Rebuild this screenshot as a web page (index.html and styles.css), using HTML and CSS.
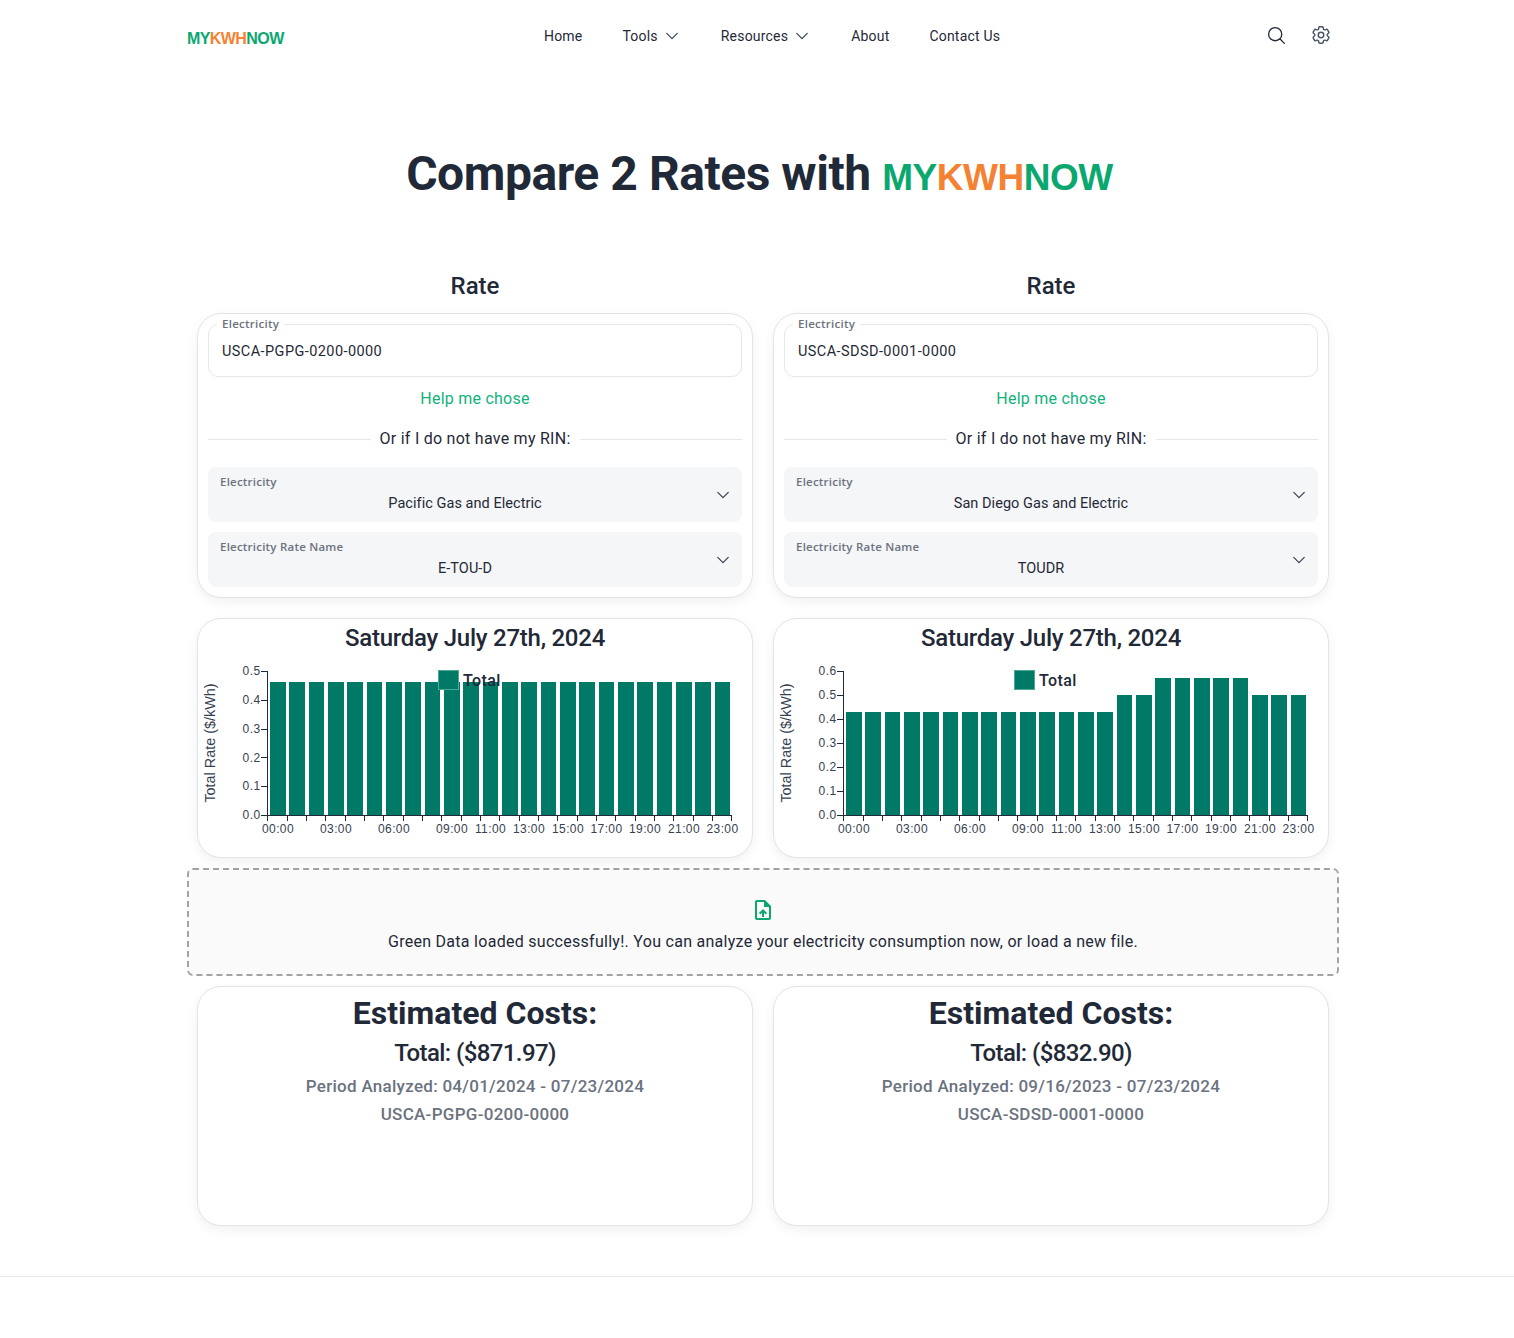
FILE: index.html
```html
<!DOCTYPE html>
<html lang="en">
<head>
<meta charset="utf-8">
<title>Compare 2 Rates</title>
<link rel="stylesheet" href="styles.css">
</head>
<body>
<header class="topbar">
  <a class="logo"><span class="g">MY</span><span class="o">KWH</span><span class="g">NOW</span></a>
  <nav class="nav">
    <a>Home</a>
    <a class="drop">Tools <svg class="chev" viewBox="0 0 24 24"><path d="M5 8.5l7 7 7-7"/></svg></a>
    <a class="drop">Resources <svg class="chev" viewBox="0 0 24 24"><path d="M5 8.5l7 7 7-7"/></svg></a>
    <a>About</a>
    <a>Contact Us</a>
  </nav>
  <div class="tools">
    <svg class="ico-search" viewBox="0 0 24 24"><path d="M21 21l-5.197-5.197m0 0A7.5 7.5 0 105.196 5.196a7.5 7.5 0 0010.607 10.607z"/></svg>
    <svg class="ico-gear" viewBox="0 0 24 24"><path d="M9.594 3.94c.09-.542.56-.94 1.11-.94h2.593c.55 0 1.02.398 1.11.94l.213 1.281c.063.374.313.686.645.87.074.04.147.083.22.127.324.196.72.257 1.075.124l1.217-.456a1.125 1.125 0 011.37.49l1.296 2.247a1.125 1.125 0 01-.26 1.431l-1.003.827c-.293.24-.438.613-.431.992a6.759 6.759 0 010 .255c-.007.378.138.75.43.99l1.005.828c.424.35.534.954.26 1.43l-1.298 2.247a1.125 1.125 0 01-1.369.491l-1.217-.456c-.355-.133-.75-.072-1.076.124a6.57 6.57 0 01-.22.128c-.331.183-.581.495-.644.869l-.213 1.28c-.09.543-.56.941-1.11.941h-2.594c-.55 0-1.02-.398-1.11-.94l-.213-1.281c-.062-.374-.312-.686-.644-.87a6.52 6.52 0 01-.22-.127c-.325-.196-.72-.257-1.076-.124l-1.217.456a1.125 1.125 0 01-1.369-.49l-1.297-2.247a1.125 1.125 0 01.26-1.431l1.004-.827c.292-.24.437-.613.43-.992a6.932 6.932 0 010-.255c.007-.378-.138-.75-.43-.99l-1.004-.828a1.125 1.125 0 01-.26-1.43l1.297-2.247a1.125 1.125 0 011.37-.491l1.216.456c.356.133.751.072 1.076-.124.072-.044.146-.087.22-.128.332-.183.582-.495.644-.869l.214-1.281z"/><circle cx="12" cy="12" r="3"/></svg>
  </div>
</header>

<main class="main">
  <h1 class="title">Compare 2 Rates with <span class="brand"><span class="g">MY</span><span class="o">KWH</span><span class="g">NOW</span></span></h1>

  <div class="cols heads">
    <h2 class="rate-head">Rate</h2>
    <h2 class="rate-head">Rate</h2>
  </div>

  <div class="cols">
    <section class="card form">
      <fieldset class="rin"><legend>Electricity</legend><div class="rin-val">USCA-PGPG-0200-0000</div></fieldset>
      <a class="help">Help me chose</a>
      <div class="divider"><span>Or if I do not have my RIN:</span></div>
      <div class="select"><div class="sel-label">Electricity</div><div class="sel-val">Pacific Gas and Electric</div><svg class="chev sel-chev" viewBox="0 0 24 24"><path d="M5 8.5l7 7 7-7"/></svg></div>
      <div class="select"><div class="sel-label">Electricity Rate Name</div><div class="sel-val">E-TOU-D</div><svg class="chev sel-chev" viewBox="0 0 24 24"><path d="M5 8.5l7 7 7-7"/></svg></div>
    </section>
    <section class="card form">
      <fieldset class="rin"><legend>Electricity</legend><div class="rin-val">USCA-SDSD-0001-0000</div></fieldset>
      <a class="help">Help me chose</a>
      <div class="divider"><span>Or if I do not have my RIN:</span></div>
      <div class="select"><div class="sel-label">Electricity</div><div class="sel-val">San Diego Gas and Electric</div><svg class="chev sel-chev" viewBox="0 0 24 24"><path d="M5 8.5l7 7 7-7"/></svg></div>
      <div class="select"><div class="sel-label">Electricity Rate Name</div><div class="sel-val">TOUDR</div><svg class="chev sel-chev" viewBox="0 0 24 24"><path d="M5 8.5l7 7 7-7"/></svg></div>
    </section>
  </div>

  <div class="cols">
    <section class="card chart-card">
      <h3 class="chart-title">Saturday July 27th, 2024</h3>
      <svg class="chart" viewBox="198 655 554 200">
        <g class="bars">
          <rect x="270" y="682" width="15.5" height="133"/><rect x="289.3" y="682" width="15.5" height="133"/><rect x="308.7" y="682" width="15.5" height="133"/><rect x="328" y="682" width="15.5" height="133"/><rect x="347.3" y="682" width="15.5" height="133"/><rect x="366.7" y="682" width="15.5" height="133"/><rect x="386" y="682" width="15.5" height="133"/><rect x="405.3" y="682" width="15.5" height="133"/><rect x="424.7" y="682" width="15.5" height="133"/><rect x="444" y="682" width="15.5" height="133"/><rect x="463.3" y="682" width="15.5" height="133"/><rect x="482.7" y="682" width="15.5" height="133"/><rect x="502" y="682" width="15.5" height="133"/><rect x="521.3" y="682" width="15.5" height="133"/><rect x="540.7" y="682" width="15.5" height="133"/><rect x="560" y="682" width="15.5" height="133"/><rect x="579.3" y="682" width="15.5" height="133"/><rect x="598.7" y="682" width="15.5" height="133"/><rect x="618" y="682" width="15.5" height="133"/><rect x="637.3" y="682" width="15.5" height="133"/><rect x="656.7" y="682" width="15.5" height="133"/><rect x="676" y="682" width="15.5" height="133"/><rect x="695.3" y="682" width="15.5" height="133"/><rect x="714.7" y="682" width="15.5" height="133"/>
        </g>
        <path class="axis" d="M267.5 671V815.5H731M261 671.5h6M261 700.5h6M261 729.5h6M261 757.5h6M261 786.5h6M261 815.5h6M267.5 815v6M287 815v6M306.5 815v6M325.5 815v6M345 815v6M364.5 815v6M383.5 815v6M403 815v6M422.5 815v6M441.5 815v6M461 815v6M480.5 815v6M499.5 815v6M519 815v6M538.5 815v6M557.5 815v6M577 815v6M596.5 815v6M615.5 815v6M635 815v6M654.5 815v6M673.5 815v6M693 815v6M712.5 815v6M731 815v6"/>
        <g class="ylabels">
          <text x="260.5" y="675">0.5</text><text x="260.5" y="704">0.4</text><text x="260.5" y="733">0.3</text><text x="260.5" y="762">0.2</text><text x="260.5" y="790">0.1</text><text x="260.5" y="819">0.0</text>
        </g>
        <g class="xlabels">
          <text x="278" y="833">00:00</text><text x="336" y="833">03:00</text><text x="394" y="833">06:00</text><text x="452" y="833">09:00</text><text x="490.5" y="833">11:00</text><text x="529" y="833">13:00</text><text x="568" y="833">15:00</text><text x="606.5" y="833">17:00</text><text x="645" y="833">19:00</text><text x="684" y="833">21:00</text><text x="722.5" y="833">23:00</text>
        </g>
        <text class="ytitle" transform="translate(215 743) rotate(-90)">Total Rate ($/kWh)</text>
        <rect class="swatch" x="438.5" y="670.5" width="20" height="19"/>
        <text class="legend" x="463" y="686">Total</text>
      </svg>
    </section>
    <section class="card chart-card">
      <h3 class="chart-title">Saturday July 27th, 2024</h3>
      <svg class="chart" viewBox="198 655 554 200">
        <g class="bars">
          <rect x="270" y="712" width="15.5" height="103"/><rect x="289.3" y="712" width="15.5" height="103"/><rect x="308.7" y="712" width="15.5" height="103"/><rect x="328" y="712" width="15.5" height="103"/><rect x="347.3" y="712" width="15.5" height="103"/><rect x="366.7" y="712" width="15.5" height="103"/><rect x="386" y="712" width="15.5" height="103"/><rect x="405.3" y="712" width="15.5" height="103"/><rect x="424.7" y="712" width="15.5" height="103"/><rect x="444" y="712" width="15.5" height="103"/><rect x="463.3" y="712" width="15.5" height="103"/><rect x="482.7" y="712" width="15.5" height="103"/><rect x="502" y="712" width="15.5" height="103"/><rect x="521.3" y="712" width="15.5" height="103"/><rect x="540.7" y="695" width="15.5" height="120"/><rect x="560" y="695" width="15.5" height="120"/><rect x="579.3" y="678" width="15.5" height="137"/><rect x="598.7" y="678" width="15.5" height="137"/><rect x="618" y="678" width="15.5" height="137"/><rect x="637.3" y="678" width="15.5" height="137"/><rect x="656.7" y="678" width="15.5" height="137"/><rect x="676" y="695" width="15.5" height="120"/><rect x="695.3" y="695" width="15.5" height="120"/><rect x="714.7" y="695" width="15.5" height="120"/>
        </g>
        <path class="axis" d="M267.5 671V815.5H731M261 671.5h6M261 695.5h6M261 719.5h6M261 743.5h6M261 767.5h6M261 791.5h6M261 815.5h6M267.5 815v6M287 815v6M306.5 815v6M325.5 815v6M345 815v6M364.5 815v6M383.5 815v6M403 815v6M422.5 815v6M441.5 815v6M461 815v6M480.5 815v6M499.5 815v6M519 815v6M538.5 815v6M557.5 815v6M577 815v6M596.5 815v6M615.5 815v6M635 815v6M654.5 815v6M673.5 815v6M693 815v6M712.5 815v6M731 815v6"/>
        <g class="ylabels">
          <text x="260.5" y="675">0.6</text><text x="260.5" y="699">0.5</text><text x="260.5" y="723">0.4</text><text x="260.5" y="747">0.3</text><text x="260.5" y="771">0.2</text><text x="260.5" y="795">0.1</text><text x="260.5" y="819">0.0</text>
        </g>
        <g class="xlabels">
          <text x="278" y="833">00:00</text><text x="336" y="833">03:00</text><text x="394" y="833">06:00</text><text x="452" y="833">09:00</text><text x="490.5" y="833">11:00</text><text x="529" y="833">13:00</text><text x="568" y="833">15:00</text><text x="606.5" y="833">17:00</text><text x="645" y="833">19:00</text><text x="684" y="833">21:00</text><text x="722.5" y="833">23:00</text>
        </g>
        <text class="ytitle" transform="translate(215 743) rotate(-90)">Total Rate ($/kWh)</text>
        <rect class="swatch" x="438.5" y="670.5" width="20" height="19"/>
        <text class="legend" x="463" y="686">Total</text>
      </svg>
    </section>
  </div>

  <section class="dropzone">
    <svg class="upload" viewBox="0 0 24 24"><path d="M14 2H6c-1.1 0-1.99.9-1.99 2L4 20c0 1.1.89 2 1.99 2H18c1.1 0 2-.9 2-2V8l-6-6zm4 18H6V4h7v5h5v11zM8 15.01l1.41 1.41L11 14.84V19h2v-4.16l1.59 1.59L16 15.01 12.01 11 8 15.01z"/></svg>
    <p class="drop-text">Green Data loaded successfully!. You can analyze your electricity consumption now, or load a new file.</p>
  </section>

  <div class="cols">
    <section class="card cost">
      <h2 class="cost-title">Estimated Costs:</h2>
      <div class="cost-total">Total: ($871.97)</div>
      <div class="cost-sub">Period Analyzed: 04/01/2024 - 07/23/2024</div>
      <div class="cost-sub">USCA-PGPG-0200-0000</div>
    </section>
    <section class="card cost">
      <h2 class="cost-title">Estimated Costs:</h2>
      <div class="cost-total">Total: ($832.90)</div>
      <div class="cost-sub">Period Analyzed: 09/16/2023 - 07/23/2024</div>
      <div class="cost-sub">USCA-SDSD-0001-0000</div>
    </section>
  </div>
</main>
<footer class="footer"></footer>
</body>
</html>
```
FILE: styles.css
```css
* { box-sizing: border-box; }
html, body { margin: 0; padding: 0; }
body {
  background: #fff;
  color: #1f2937;
  font-family: Roboto, "Liberation Sans", sans-serif;
  font-size: 16px;
  min-height: 1338px;
}
.g { color: #0aa76f; }
.o { color: #f58233; }

.topbar {
  display: flex;
  align-items: center;
  height: 72px;
  width: 1145px;
  margin-left: 187px;
}
.logo {
  width: 357px;
  font: 700 16px/1 "Liberation Sans", sans-serif;
  letter-spacing: -.58px;
  padding-top: 5px;
}
.nav { display: flex; gap: 40px; font-size: 14px; letter-spacing: .2px; color: #1f2937; }
.nav a { display: flex; align-items: center; gap: 5px; }
.chev { width: 18px; height: 18px; fill: none; stroke: #374151; stroke-width: 1.6; stroke-linecap: round; stroke-linejoin: round; }
.tools { margin-left: auto; display: flex; gap: 23px; align-items: center; margin-top: -2px; }
.ico-search { width: 21px; height: 21px; fill: none; stroke: #1f2937; stroke-width: 1.5; stroke-linecap: round; stroke-linejoin: round; }
.ico-gear { width: 22px; height: 22px; fill: none; stroke: #4b5563; stroke-width: 1.6; stroke-linecap: round; stroke-linejoin: round; }

.main { width: 1152px; margin-left: 187px; }
.title {
  margin: 0;
  padding: 74px 7px 0 0;
  height: 176px;
  text-align: center;
  font-size: 48px;
  line-height: 56px;
  font-weight: 700;
  letter-spacing: -.45px;
  color: #1f2937;
}
.brand { font: 700 37px/56px "Liberation Sans", sans-serif; letter-spacing: -.45px; }

.cols { display: grid; grid-template-columns: 556px 556px; gap: 20px; padding: 0 10px; }
.heads { height: 65px; padding-top: 22px; }
.rate-head { margin: 0; text-align: center; font-size: 24px; line-height: 32px; font-weight: 500; color: #1f2937; }

.card {
  background: #fff;
  border: 1px solid #e2e4e9;
  border-radius: 24px;
  box-shadow: 0 4px 12px rgba(0,0,0,.06);
}
.form { height: 285px; padding: 3px 10px 10px; margin-bottom: 20px; }
.rin {
  margin: 0;
  padding: 0 13px;
  height: 60px;
  border: 1px solid #e5e7eb;
  border-radius: 10px;
}
.rin legend {
  padding: 0 5px;
  margin-left: -5px;
  font: 600 11.5px/14px "Open Sans", sans-serif;
  letter-spacing: .27px;
  color: #6b7280;
}
.rin-val { font-size: 14.5px; line-height: 20px; padding-top: 11px; letter-spacing: .42px; }
.help {
  display: block;
  margin-top: 10px;
  text-align: center;
  color: #10b27c;
  line-height: 24px;
  letter-spacing: .23px;
}
.divider {
  display: flex;
  align-items: center;
  gap: 9px;
  margin: 16px 0 16px;
  line-height: 24px;
  letter-spacing: .26px;
  color: #1f2937;
}
.divider::before, .divider::after { content: ""; flex: 1; height: 1px; background: #e5e7eb; }
.select {
  position: relative;
  height: 55px;
  margin-bottom: 10px;
  padding: 7px 12px;
  background: #f5f6f8;
  border-radius: 8px;
}
.sel-label { font: 600 11.5px/16px "Open Sans", sans-serif; letter-spacing: .22px; color: #6b7280; }
.sel-val { margin-top: 4px; padding-right: 20px; text-align: center; font-size: 14.5px; line-height: 20px; letter-spacing: .05px; color: #1f2937; }
.sel-chev { position: absolute; right: 10px; top: 19px; }

.chart-card { height: 240px; margin-bottom: 10px; }
.chart-title { margin: 0; height: 36px; padding-top: 1px; text-align: center; font-size: 24px; line-height: 36px; font-weight: 500; letter-spacing: -.25px; color: #1f2937; }
.chart { display: block; width: 554px; height: 200px; }
.bars rect { fill: #007a67; shape-rendering: crispEdges; }
.axis { fill: none; stroke: #1f2937; stroke-width: 1; shape-rendering: crispEdges; }
.chart text { font-family: "Liberation Sans", sans-serif; fill: #374151; }
.ylabels text { font-size: 12px; letter-spacing: .4px; text-anchor: end; }
.xlabels text { font-size: 12px; letter-spacing: .4px; text-anchor: middle; }
.chart .ytitle { font-size: 14.4px; text-anchor: middle; }
.swatch { fill: #007a67; stroke: #4fa897; stroke-width: 1; shape-rendering: crispEdges; }
.chart .legend { font-family: Roboto, sans-serif; font-size: 16px; font-weight: 500; letter-spacing: .4px; fill: #1f2937; }

.dropzone {
  height: 108px;
  margin-bottom: 10px;
  padding-top: 28px;
  background: #fafafa;
  border: 2px dashed #a3a3a3;
  border-radius: 6px;
  text-align: center;
}
.upload { display: block; margin: 0 auto; width: 24px; height: 24px; fill: #0aa76f; }
.drop-text { margin: 8px 0 0; font-size: 16px; line-height: 24px; letter-spacing: .28px; color: #1f2937; }

.cost { height: 240px; text-align: center; padding-top: 6px; }
.cost-title { margin: 0; font-size: 32px; line-height: 40px; font-weight: 700; color: #1f2937; }
.cost-total { margin-top: 2px; font-size: 24px; line-height: 36px; font-weight: 500; letter-spacing: -.6px; color: #1f2937; }
.cost-sub { position: relative; top: 1px; font-size: 17px; line-height: 28px; font-weight: 500; letter-spacing: .28px; color: #6b7280; }

.footer { margin-top: 50px; border-top: 1px solid #e5e7eb; height: 62px; }
```
